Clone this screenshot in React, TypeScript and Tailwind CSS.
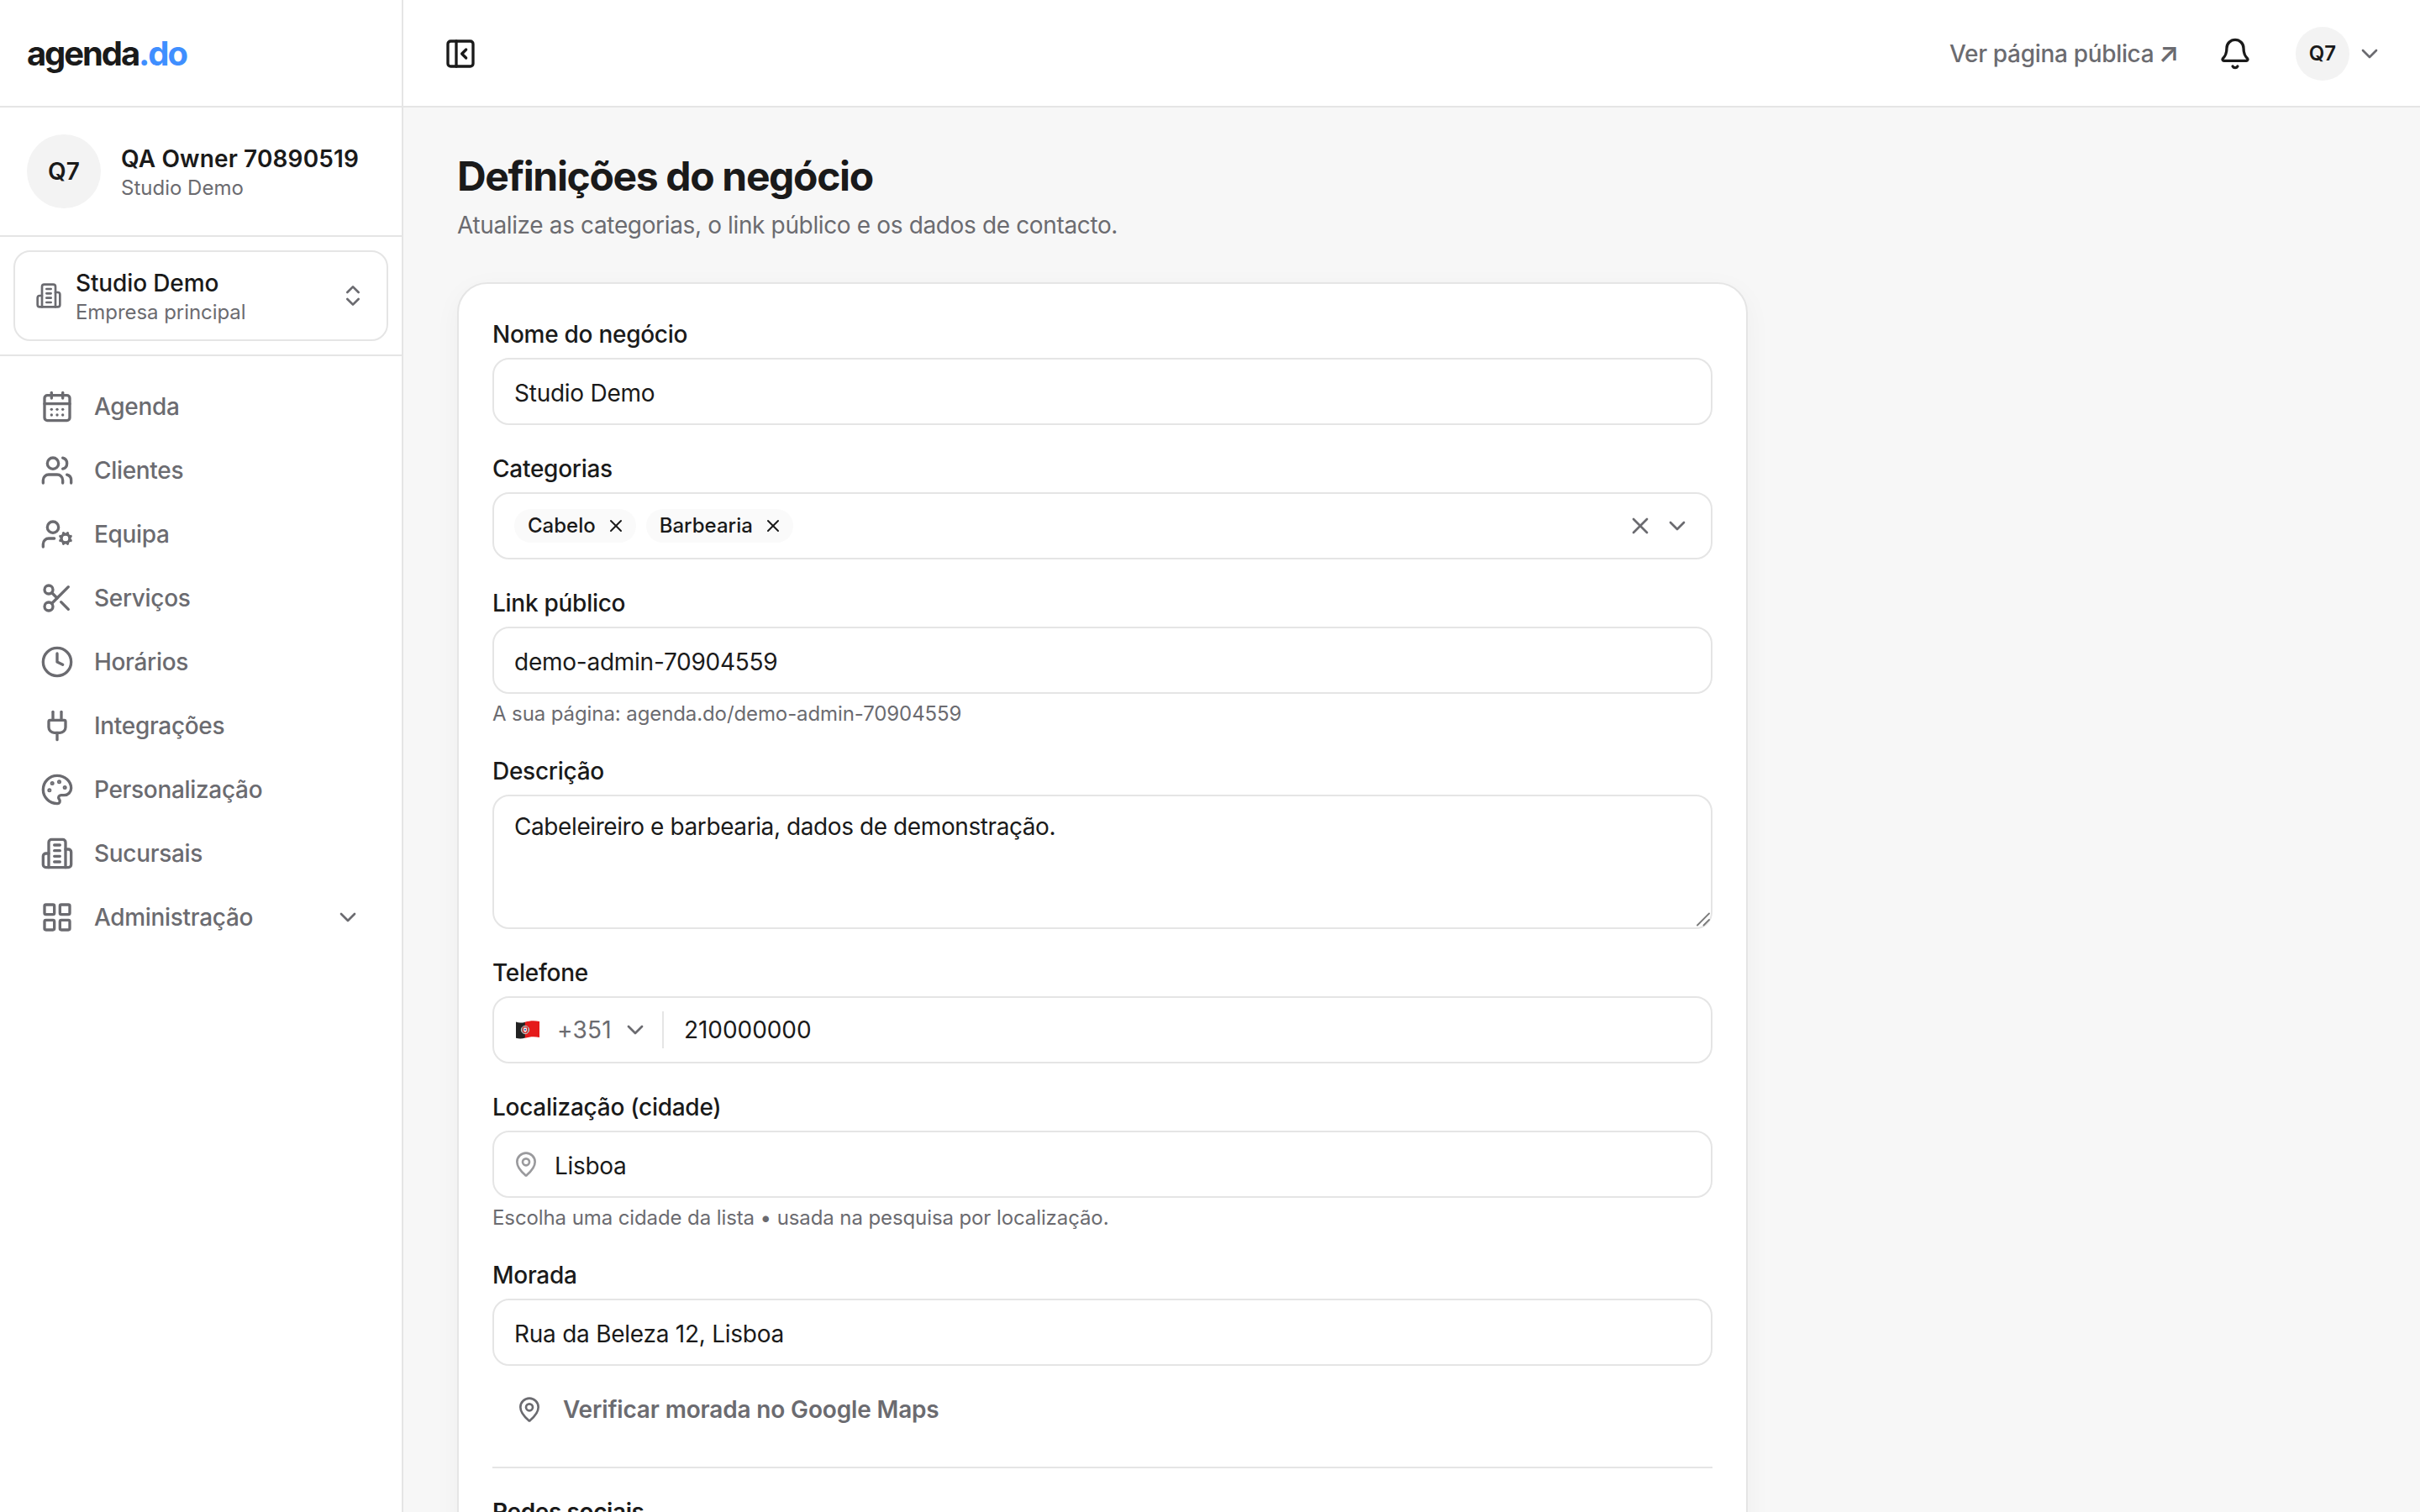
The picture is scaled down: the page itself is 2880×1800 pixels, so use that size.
import React from "react";
import {
  Bell,
  CalendarDays,
  ChevronDown,
  ChevronsUpDown,
  Clock,
  LayoutGrid,
  MapPin,
  Palette,
  PanelLeftClose,
  Plug,
  Scissors,
  UserCog,
  Users,
  X,
} from "lucide-react";

type IconProps = { className?: string };

function Building({ className }: IconProps) {
  return (
    <svg
      className={className}
      viewBox="0 0 24 24"
      fill="none"
      stroke="currentColor"
      strokeWidth="2"
      strokeLinecap="round"
      strokeLinejoin="round"
    >
      <path d="M6 22V4a2 2 0 0 1 2-2h8a2 2 0 0 1 2 2v18Z" />
      <path d="M6 12H4a2 2 0 0 0-2 2v6a2 2 0 0 0 2 2h2" />
      <path d="M18 9h2a2 2 0 0 1 2 2v9a2 2 0 0 1-2 2h-2" />
      <path d="M10 6h4M10 10h4M10 14h4M10 18h4" />
    </svg>
  );
}

function PortugalFlag() {
  return (
    <svg className="h-[22px] w-[28px] shrink-0" viewBox="0 0 28 22">
      <path d="M0 1.6C4 3.2 7.500 2.600 11 1.700V20.600C7.500 21.700 4 21.900 0 20.800Z" fill="#222222" />
      <path d="M10.800 1.700C16 .2 21.500 -.3 28 .9V19.900C21.500 18.600 16 19.200 10.800 20.700Z" fill="#e51b1b" />
      <circle cx="11" cy="11" r="4.700" fill="#8a8a86" stroke="#c9c9c4" strokeWidth="1" />
      <path d="M8.600 8h4.800v3.600a2.400 2.700 0 0 1-4.800 0Z" fill="#ffffff" stroke="#d42020" strokeWidth="1.100" />
      <circle cx="11" cy="10.800" r="1.100" fill="#2a62b8" />
    </svg>
  );
}

const navItems = [
  { label: "Agenda", icon: CalendarDays },
  { label: "Clientes", icon: Users },
  { label: "Equipa", icon: UserCog },
  { label: "Serviços", icon: Scissors },
  { label: "Horários", icon: Clock },
  { label: "Integrações", icon: Plug },
  { label: "Personalização", icon: Palette },
  { label: "Sucursais", icon: Building },
  { label: "Administração", icon: LayoutGrid, expandable: true },
];

function Sidebar() {
  return (
    <aside className="flex w-[480px] shrink-0 flex-col border-r-2 border-[#e5e5e5] bg-white">
      <div className="flex h-32 shrink-0 items-center border-b-2 border-[#e5e5e5] px-8 pt-0.5">
        <span className="text-[40px] leading-none font-bold tracking-[-2.1px]">
          agenda<span className="text-[#3f8fff]">.do</span>
        </span>
      </div>

      <div className="flex items-center gap-6 border-b-2 border-[#e5e5e5] px-8 py-8">
        <div className="flex size-[88px] shrink-0 items-center justify-center rounded-full bg-[#f3f3f3] text-[28px] font-semibold">
          Q7
        </div>
        <div className="min-w-0 pt-[3px]">
          <p className="text-[28px] leading-9 font-semibold tracking-[0.14px] whitespace-nowrap">QA Owner 70890519</p>
          <p className="text-2xl leading-[34px] text-[#6b6b70]">Studio Demo</p>
        </div>
      </div>

      <div className="border-b-2 border-[#e5e5e5] p-4">
        <button className="flex h-[108px] w-full items-center gap-4 rounded-[20px] border-2 border-[#e5e5e5] px-6 text-left">
          <Building className="size-8 shrink-0 text-[#6b6b70]" />
          <span className="flex flex-1 flex-col pt-0.5">
            <span className="text-[28px] leading-9 font-medium tracking-[-0.13px]">Studio Demo</span>
            <span className="text-2xl leading-[33px] tracking-[-0.06px] text-[#6b6b70]">Empresa principal</span>
          </span>
          <ChevronsUpDown className="size-8 text-[#6b6b70]" />
        </button>
      </div>

      <nav className="flex flex-col gap-1 p-6">
        {navItems.map(({ label, icon: Icon, expandable }) => (
          <a key={label} className="flex h-[72px] items-center gap-6 pr-6 pl-6 text-[28px] font-medium tracking-[-0.32px] text-[#6b6b70]">
            <Icon className="size-10 shrink-0" />
            <span className="flex-1">{label}</span>
            {expandable && <ChevronDown className="size-8" />}
          </a>
        ))}
      </nav>
    </aside>
  );
}

function Topbar() {
  return (
    <header className="flex h-32 shrink-0 items-center justify-between border-b-2 border-[#e5e5e5] bg-white pt-0.5 pr-11 pl-12">
      <PanelLeftClose className="size-10" />
      <div className="flex items-center">
        <a className="w-[320px] text-[28px] leading-10 font-medium tracking-[-0.32px] whitespace-nowrap text-[#6b6b70]">
          Ver página pública <span className="-ml-0.5 text-[32px] leading-none font-semibold">↗</span>
        </a>
        <Bell className="size-10" />
        <div className="ml-[52px] flex size-16 items-center justify-center rounded-full bg-[#f3f3f3] text-2xl font-semibold">
          Q7
        </div>
        <ChevronDown className="ml-2 size-8 text-[#6b6b70]" />
      </div>
    </header>
  );
}

type FieldProps = { label: string; hint?: string; children: React.ReactNode };

function Field({ label, hint, children }: FieldProps) {
  return (
    <div className="flex flex-col">
      <label className="mb-3 h-9 text-[28px] leading-10 font-medium tracking-[-0.27px]">{label}</label>
      {children}
      {hint && (
        <p className="mt-2 h-8 text-2xl leading-8 tracking-[-0.1px] whitespace-nowrap text-[#6b6b70]">{hint}</p>
      )}
    </div>
  );
}

function TextBox({ value }: { value: string }) {
  return (
    <div className="flex h-20 items-center rounded-[20px] border-2 border-[#e5e5e5] px-6 pt-[3px] text-[28px] tracking-[-0.25px]">
      {value}
    </div>
  );
}

function Chip({ label }: { label: string }) {
  return (
    <span className="flex h-10 items-center gap-3 rounded-full bg-[#fafafa] pr-3 pl-4">
      <span className="text-2xl leading-none font-medium">{label}</span>
      <X className="size-6" />
    </span>
  );
}

function SettingsCard() {
  return (
    <section className="flex w-[1536px] flex-col gap-8 rounded-[36px] border-2 border-[#e5e5e5] bg-white p-10 shadow-[0_8px_32px_rgba(0,0,0,0.04)]">
      <Field label="Nome do negócio">
        <TextBox value="Studio Demo" />
      </Field>

      <Field label="Categorias">
        <div className="flex h-20 items-center gap-3 rounded-[20px] border-2 border-[#e5e5e5] px-6">
          <Chip label="Cabelo" />
          <Chip label="Barbearia" />
          <X className="ml-auto size-8 text-[#6b6b70]" />
          <ChevronDown className="size-8 text-[#6b6b70]" />
        </div>
      </Field>

      <Field label="Link público" hint="A sua página: agenda.do/demo-admin-70904559">
        <TextBox value="demo-admin-70904559" />
      </Field>

      <Field label="Descrição">
        <div className="relative h-40 rounded-[20px] border-2 border-[#e5e5e5] px-6 py-4 text-[28px] leading-10 tracking-[-0.41px]">
          Cabeleireiro e barbearia, dados de demonstração.
          <svg
            className="absolute right-0 bottom-0 size-[18px]"
            viewBox="0 0 18 18"
            stroke="#7a7a7a"
            strokeWidth="1.800"
            strokeLinecap="round"
          >
            <path d="M2 15.500L16 1.500M9.500 15.500L16 9" />
          </svg>
        </div>
      </Field>

      <Field label="Telefone">
        <div className="flex h-20 items-center rounded-[20px] border-2 border-[#e5e5e5] pl-[26px] text-[28px]">
          <PortugalFlag />
          <span className="ml-[21px] w-[77px] tracking-[0.2px] text-[#6b6b70]">+351</span>
          <ChevronDown className="size-8 text-[#6b6b70]" />
          <span className="ml-4 h-11 w-0.5 bg-[#e5e5e5]" />
          <span className="ml-6 tracking-[-0.06px]">210000000</span>
        </div>
      </Field>

      <Field label="Localização (cidade)" hint="Escolha uma cidade da lista • usada na pesquisa por localização.">
        <div className="flex h-20 items-center gap-[18px] rounded-[20px] border-2 border-[#e5e5e5] pl-[22px] text-[28px] tracking-[-0.3px]">
          <MapPin className="size-8 text-[#9a9a9d]" />
          <span className="pt-[3px]">Lisboa</span>
        </div>
      </Field>

      <div className="flex flex-col">
        <Field label="Morada">
          <TextBox value="Rua da Beleza 12, Lisboa" />
        </Field>
        <button className="mt-4 flex h-[72px] items-center gap-6 pl-7 text-[28px] font-semibold tracking-[-0.16px] text-[#6b6b70]">
          <MapPin className="size-8" />
          Verificar morada no Google Maps
        </button>
      </div>

      <div className="border-t-2 border-[#e5e5e5] pt-8">
        <h2 className="h-9 text-[28px] leading-10 font-semibold tracking-[-0.4px]">Redes sociais</h2>
      </div>
    </section>
  );
}

export default function App() {
  return (
    <div className="flex h-screen w-full overflow-hidden bg-[#f7f7f7] font-['Inter',sans-serif] text-[#1a1a1a] antialiased">
      <Sidebar />
      <div className="flex min-w-0 flex-1 flex-col">
        <Topbar />
        <main className="min-h-0 flex-1 overflow-hidden px-16 pt-[50px]">
          <h1 className="text-5xl leading-16 font-bold tracking-[-1.35px]">Definições do negócio</h1>
          <p className="mt-1.5 mb-12 text-[28px] leading-10 tracking-[-0.36px] text-[#6b6b70]">
            Atualize as categorias, o link público e os dados de contacto.
          </p>
          <SettingsCard />
        </main>
      </div>
    </div>
  );
}
